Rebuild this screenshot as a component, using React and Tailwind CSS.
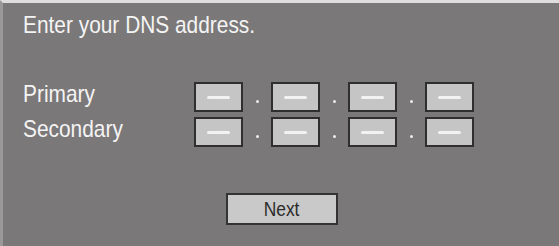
import React from 'react';

const font = { fontFamily: '"Liberation Sans", Arial, sans-serif' };

const Octet = () => (
  <div className="w-[49px] h-[30px] bg-[#c5c5c5] border-2 border-[#2f2f2f] flex items-center justify-center">
    <div className="w-[23px] h-[3px] bg-[#f2f2f2] rounded-full" />
  </div>
);

const Dot = () => (
  <div className="w-[28px] h-[30px] flex justify-center items-start pt-[18px]">
    <div className="w-[3px] h-[3px] rounded-full bg-[#ececec]" />
  </div>
);

const AddressRow = ({ label }) => (
  <div className="flex items-start">
    <div className="w-[171px] text-[24px] leading-[24px] text-[#f4f4f4]">
      <span className="inline-block scale-x-[0.87] origin-left whitespace-nowrap">{label}</span>
    </div>
    <Octet />
    <Dot />
    <Octet />
    <Dot />
    <Octet />
    <Dot />
    <Octet />
  </div>
);

export default function App() {
  return (
    <div
      style={font}
      className="w-[559px] h-[246px] bg-[#7b7879] border-t-[3px] border-t-[#dedede] border-l-[3px] border-l-[#9b9899] pl-[20px] pt-[8px] overflow-hidden"
    >
      <div className="text-[24px] leading-[28px] text-[#f4f4f4]">
        <span className="inline-block scale-x-[0.87] origin-left whitespace-nowrap">Enter your DNS address.</span>
      </div>
      <div className="mt-[43px] flex flex-col gap-[5px]">
        <AddressRow label="Primary" />
        <AddressRow label="Secondary" />
      </div>
      <div className="mt-[46px] ml-[203px]">
        <button className="w-[112px] h-[32px] bg-[#c9c9c9] border-2 border-[#333333] flex items-center justify-center text-[20px] leading-[20px] text-[#2b2b2b]">
          <span className="inline-block scale-x-[0.87]">Next</span>
        </button>
      </div>
    </div>
  );
}
